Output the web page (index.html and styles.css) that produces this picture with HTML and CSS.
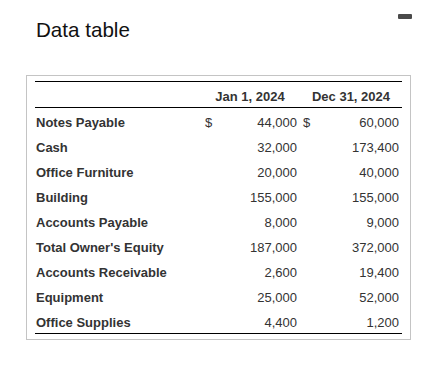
FILE: index.html
```html
<!DOCTYPE html>
<html>
<head>
<meta charset="utf-8">
<link rel="stylesheet" href="styles.css">
</head>
<body>
<div class="page">
  <div class="header">
    <h1 class="title">Data table</h1>
    <span class="minimize" aria-label="minimize"></span>
  </div>
  <div class="box">
    <div class="grid">
      <div class="hd blank"></div>
      <div class="hd span">Jan 1, 2024</div>
      <div class="hd span">Dec 31, 2024</div>

      <div class="lbl">Notes Payable</div><div class="cur c1">$</div><div class="num">44,000</div><div class="cur c2">$</div><div class="num">60,000</div>
      <div class="lbl">Cash</div><div class="cur c1"></div><div class="num">32,000</div><div class="cur c2"></div><div class="num">173,400</div>
      <div class="lbl">Office Furniture</div><div class="cur c1"></div><div class="num">20,000</div><div class="cur c2"></div><div class="num">40,000</div>
      <div class="lbl">Building</div><div class="cur c1"></div><div class="num">155,000</div><div class="cur c2"></div><div class="num">155,000</div>
      <div class="lbl">Accounts Payable</div><div class="cur c1"></div><div class="num">8,000</div><div class="cur c2"></div><div class="num">9,000</div>
      <div class="lbl">Total Owner's Equity</div><div class="cur c1"></div><div class="num">187,000</div><div class="cur c2"></div><div class="num">372,000</div>
      <div class="lbl">Accounts Receivable</div><div class="cur c1"></div><div class="num">2,600</div><div class="cur c2"></div><div class="num">19,400</div>
      <div class="lbl">Equipment</div><div class="cur c1"></div><div class="num">25,000</div><div class="cur c2"></div><div class="num">52,000</div>
      <div class="lbl">Office Supplies</div><div class="cur c1"></div><div class="num">4,400</div><div class="cur c2"></div><div class="num">1,200</div>
    </div>
  </div>
</div>
</body>
</html>
```
FILE: styles.css
```css
html, body {
  margin: 0;
  padding: 0;
  background: #fff;
}
body {
  font-family: "Liberation Sans", Arial, sans-serif;
}
.page {
  padding: 14px 16px 0 26px;
  width: 386px;
}
.header {
  position: relative;
  height: 61px;
}
.title {
  margin: 0;
  padding: 4px 0 0 10px;
  font-size: 20.6px;
  font-weight: normal;
  line-height: 24px;
  color: #111;
}
.minimize {
  position: absolute;
  right: 0;
  top: 0;
  width: 14px;
  height: 5px;
  border-radius: 1px;
  background: #4a4a4a;
}
.box {
  width: 367px;
  border: 1px solid #c4c4c4;
  padding: 5px 8px;
}
.grid {
  display: grid;
  grid-template-columns: 165px 20px 80px 20px 82px;
  border-top: 1px solid #000;
  border-bottom: 1px solid #000;
  font-size: 13px;
  line-height: 16px;
  color: #333;
}
.grid > div {
  padding: 7px 0 2px;
  height: 16px;
  white-space: nowrap;
}
.hd {
  font-weight: bold;
  border-bottom: 1px solid #000;
}
.span {
  grid-column: span 2;
  text-align: center;
}
.lbl {
  font-weight: bold;
  padding-left: 1px !important;
}
.cur.c1 { padding-left: 5px !important; }
.cur.c2 { padding-left: 3px !important; }
.num {
  text-align: right;
  padding-right: 3px !important;
}
```
